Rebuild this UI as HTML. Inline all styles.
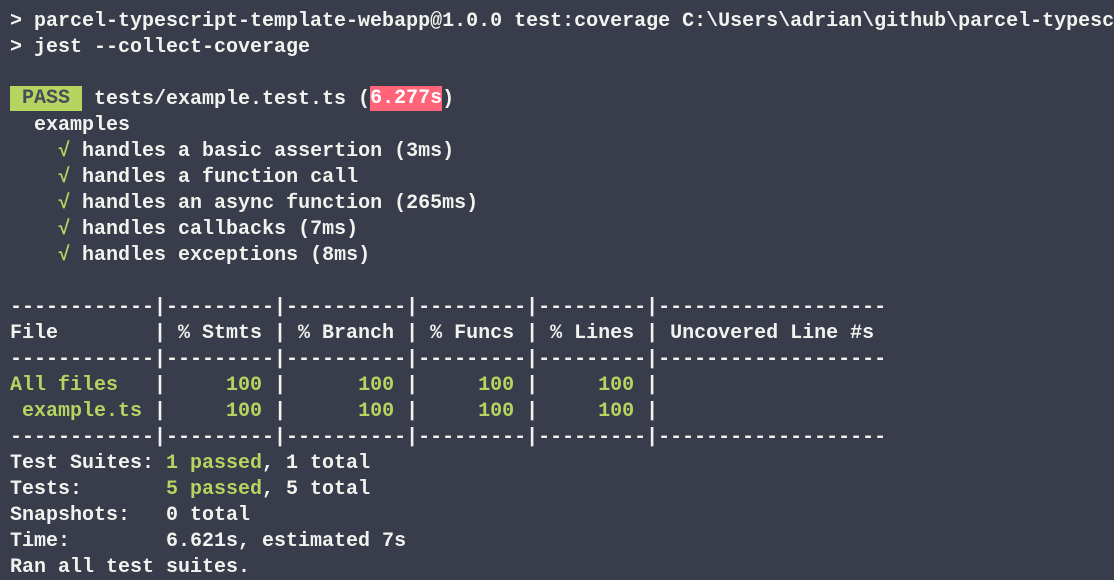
<!DOCTYPE html>
<html><head><meta charset="utf-8"><style>
html,body{margin:0;padding:0;background:#393c4b;width:1114px;height:580px;overflow:hidden}
pre{margin:0;padding:9px 0 0 10px;font-family:"Liberation Mono",monospace;font-size:20px;line-height:26px;color:#f2f2ee;font-weight:bold;white-space:pre}
.g{color:#b5d460}
.pass{background:#b5d460;color:#4a4d57;display:inline-block;height:25px;line-height:25px;vertical-align:top;margin-top:-1px}
.r{background:#ff6479;color:#fff;display:inline-block;height:25px;line-height:25px;vertical-align:top;margin-top:-1px}
</style></head><body><pre>&gt; parcel-typescript-template-webapp@1.0.0 test:coverage C:\Users\adrian\github\parcel-typesc
&gt; jest --collect-coverage

<span class="pass"> PASS </span> tests/example.test.ts (<span class="r">6.277s</span>)
  examples
    <span class="g">√</span> handles a basic assertion (3ms)
    <span class="g">√</span> handles a function call
    <span class="g">√</span> handles an async function (265ms)
    <span class="g">√</span> handles callbacks (7ms)
    <span class="g">√</span> handles exceptions (8ms)

------------|---------|----------|---------|---------|-------------------
File        | % Stmts | % Branch | % Funcs | % Lines | Uncovered Line #s
------------|---------|----------|---------|---------|-------------------
<span class="g">All files  </span> | <span class="g">    100</span> | <span class="g">     100</span> | <span class="g">    100</span> | <span class="g">    100</span> |
<span class="g"> example.ts</span> | <span class="g">    100</span> | <span class="g">     100</span> | <span class="g">    100</span> | <span class="g">    100</span> |
------------|---------|----------|---------|---------|-------------------
Test Suites: <span class="g">1 passed</span>, 1 total
Tests:       <span class="g">5 passed</span>, 5 total
Snapshots:   0 total
Time:        6.621s, estimated 7s
Ran all test suites.</pre></body></html>
